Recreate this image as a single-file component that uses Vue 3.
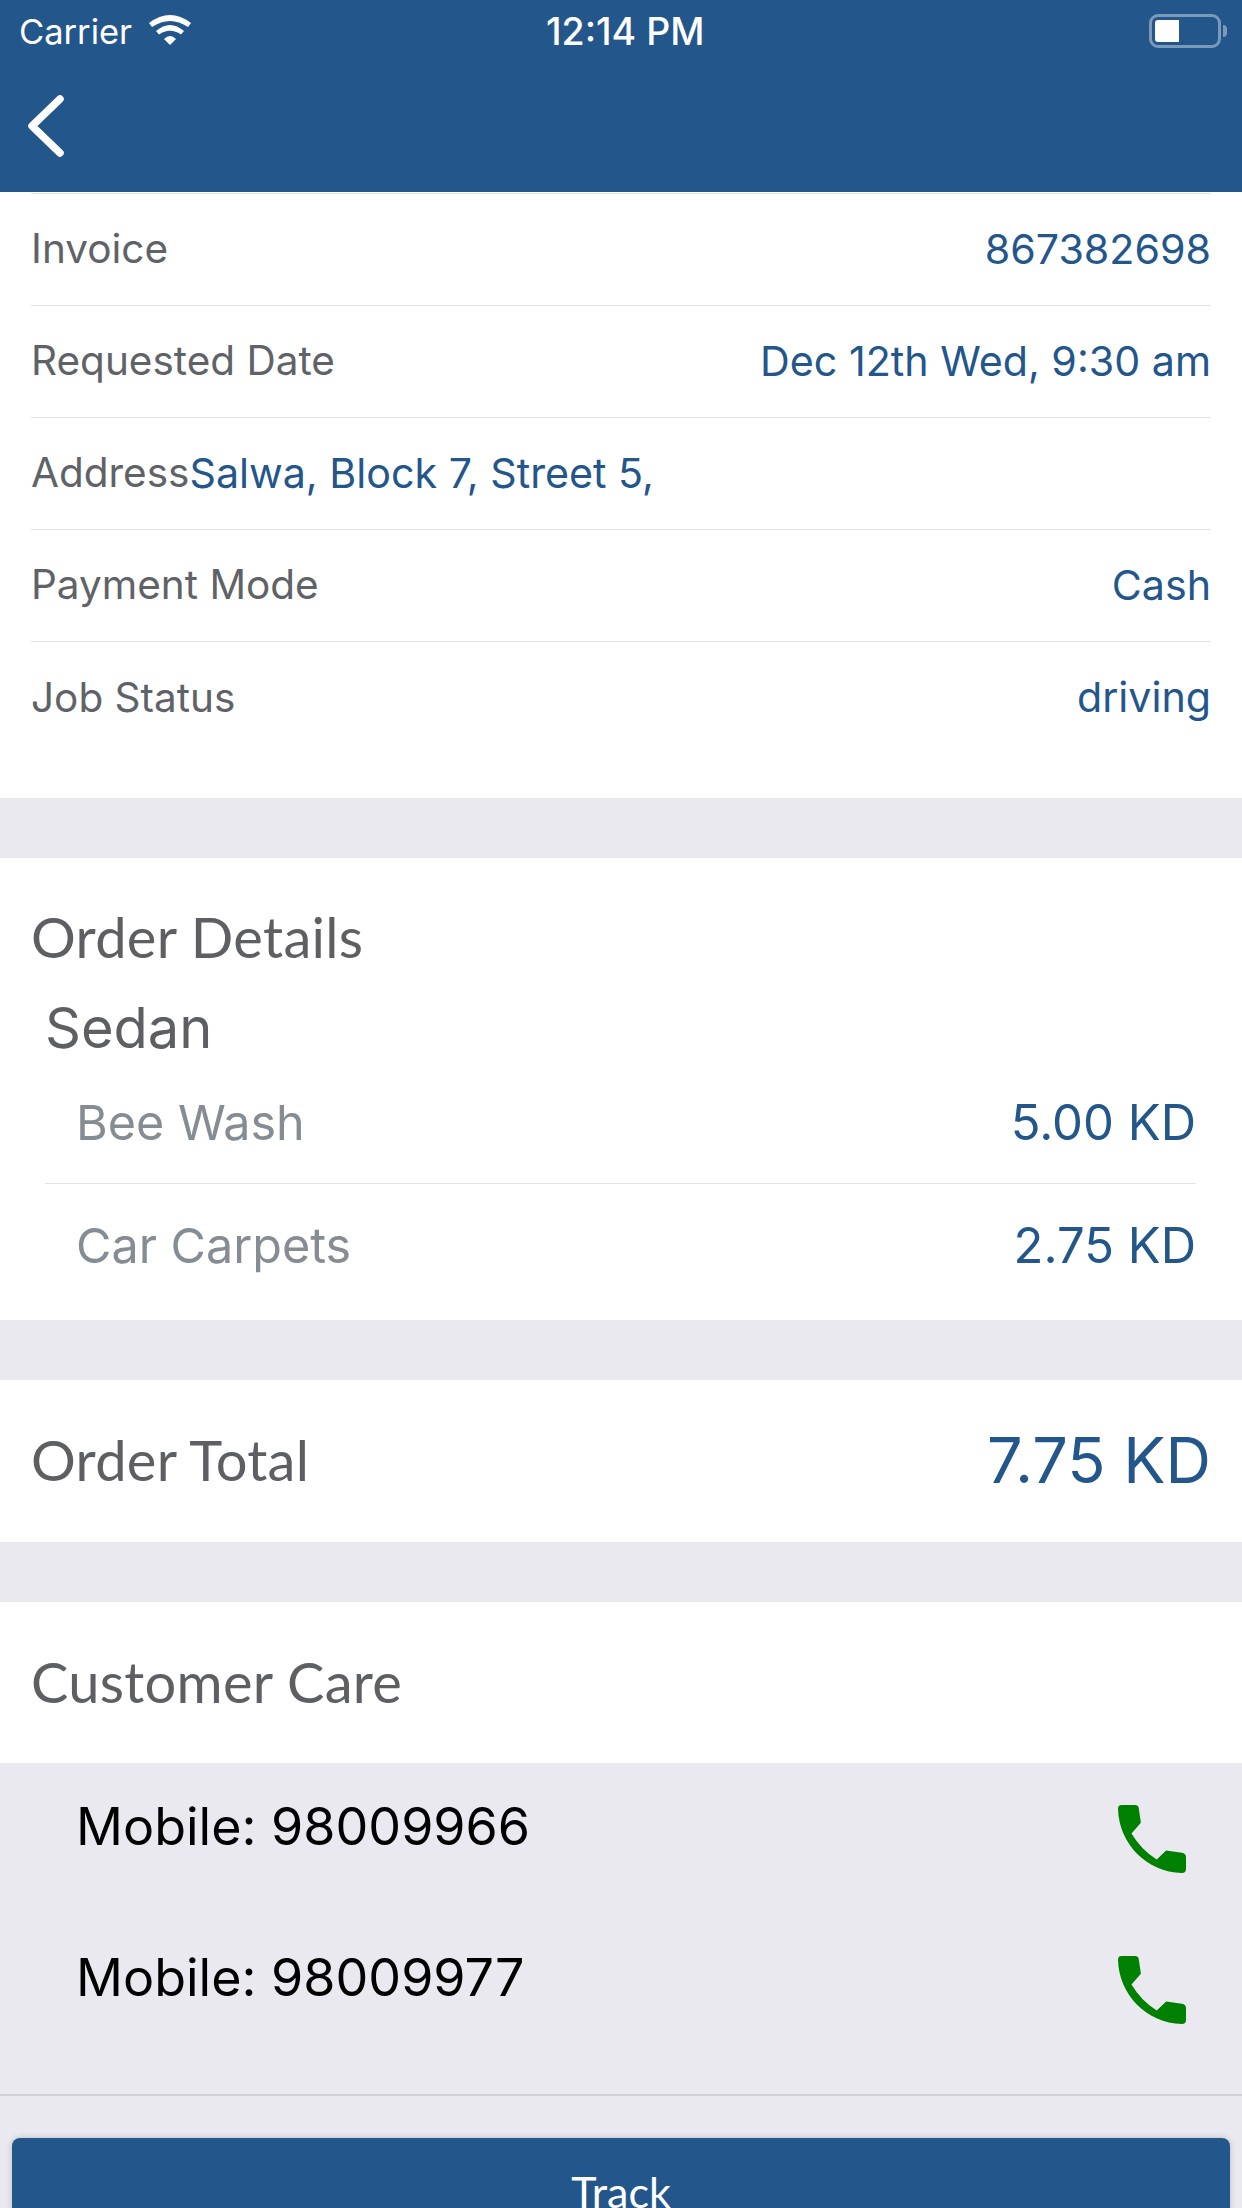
<template>
  <div class="screen">
    <header class="header">
      <div class="status">
        <div class="status__left">
          <span>Carrier</span>
          <svg class="wifi" width="42" height="30" viewBox="0 0 42 30">
            <path d="M0 8 Q21 -8 42 8 L39 12 Q21 0 3 12 Z" fill="#fff" />
            <path d="M7 16 Q21 4 35 16 L32 19.500 Q21 12 10 19.500 Z" fill="#fff" />
            <path d="M15 24 Q21 18 27 24 L21 30 Z" fill="#fff" />
          </svg>
        </div>
        <span class="status__time">12:14 PM</span>
        <div class="battery">
          <div class="battery__body"><div class="battery__level"></div></div>
          <div class="battery__tip"></div>
        </div>
      </div>
      <div class="nav">
        <svg width="40" height="64" viewBox="0 0 40 64">
          <path d="M34 5 L6 32 L34 59" fill="none" stroke="#fff" stroke-width="7.5" stroke-linecap="round" stroke-linejoin="round" />
        </svg>
      </div>
    </header>

    <section class="card info">
      <div class="info__row" v-for="row in infoRows" :key="row.label">
        <span class="info__label">{{ row.label }}</span>
        <span class="info__value">{{ row.value }}</span>
      </div>
      <div class="info__row info__row--address">
        <span class="info__label">Address</span>
        <span class="info__value">Salwa, Block 7, Street 5,</span>
      </div>
      <div class="info__row" v-for="row in infoRowsBottom" :key="row.label">
        <span class="info__label">{{ row.label }}</span>
        <span class="info__value">{{ row.value }}</span>
      </div>
    </section>

    <section class="card details">
      <h2 class="title">Order Details</h2>
      <div class="details__type">Sedan</div>
      <div class="details__list">
        <div class="details__row" v-for="item in items" :key="item.name">
          <span class="details__name">{{ item.name }}</span>
          <span class="details__price">{{ item.price }}</span>
        </div>
      </div>
    </section>

    <section class="card total">
      <h2 class="title">Order Total</h2>
      <span class="total__value">7.75 KD</span>
    </section>

    <section class="card care">
      <h2 class="title">Customer Care</h2>
    </section>

    <div class="phones">
      <div class="phones__row" v-for="phone in phones" :key="phone">
        <span class="phones__text">Mobile: {{ phone }}</span>
        <svg width="68" height="68" viewBox="115 75 202 202">
          <path fill="#008000" d="M125 75 H165 Q177 75 177 87 L183 128 L155 160 Q185 210 230 237 L258 210 L305 217 Q317 219 317 230 V265 Q317 277 305 277 C200 275 118 190 115 87 Q115 75 125 75 Z" />
        </svg>
      </div>
    </div>

    <div class="footer">
      <button class="track" type="button">Track</button>
    </div>
  </div>
</template>

<script setup>
const infoRows = [
  { label: "Invoice", value: "867382698" },
  { label: "Requested Date", value: "Dec 12th Wed, 9:30 am" },
];

const infoRowsBottom = [
  { label: "Payment Mode", value: "Cash" },
  { label: "Job Status", value: "driving" },
];

const items = [
  { name: "Bee Wash", price: "5.00 KD" },
  { name: "Car Carpets", price: "2.75 KD" },
];

const phones = ["98009966", "98009977"];
</script>

<style scoped>
.screen {
  width: 1242px;
  height: 2208px;
  overflow: hidden;
  background: #e9e9ef;
  font-family: "Inter", "Liberation Sans", sans-serif;
}

.header {
  height: 192px;
  background: #23568b;
  color: #fff;
}

.status {
  height: 62px;
  padding: 0 15px 0 19px;
  display: flex;
  align-items: center;
  justify-content: space-between;
  position: relative;
  font-size: 34.5px;
}

.status__left {
  display: flex;
  align-items: center;
  gap: 17px;
}

.wifi {
  margin-top: -2px;
}

.status__time {
  position: absolute;
  left: 546px;
  font-size: 37.5px;
  font-weight: 500;
}

.battery {
  display: flex;
  align-items: center;
  gap: 2px;
}

.battery__body {
  width: 72px;
  height: 34px;
  box-sizing: border-box;
  padding: 3px;
  border: 3px solid rgba(255, 255, 255, 0.4);
  border-radius: 9px;
}

.battery__level {
  width: 24px;
  height: 100%;
  background: #fff;
  border-radius: 3px 0 0 3px;
}

.battery__tip {
  width: 4px;
  height: 12px;
  background: rgba(255, 255, 255, 0.4);
  border-radius: 0 4px 4px 0;
}

.nav {
  padding: 32px 0 0 26px;
}

.card {
  background: #fff;
  margin-bottom: 60px;
}

.info {
  height: 606px;
  box-sizing: border-box;
  padding: 1px 31px 0;
}

.info__row {
  height: 112px;
  padding-bottom: 2px;
  display: flex;
  align-items: center;
  justify-content: space-between;
  border-bottom: 1px solid #e3e3e6;
  box-sizing: border-box;
  font-size: 40.5px;
}

.info__row:first-child {
  height: 113px;
  border-top: 1px solid #e3e3e6;
}

.info__row:last-child {
  border-bottom: none;
}

.info__row--address {
  justify-content: flex-start;
}

.info__label {
  color: #5f6368;
}

.info__value {
  color: #23568b;
  font-size: 41.2px;
}

.title {
  margin: 0;
  font-size: 56px;
  line-height: 66px;
  font-weight: 400;
  letter-spacing: 0.3px;
  color: #5d5f63;
  font-family: "Lato", "Liberation Sans", sans-serif;
}

.details {
  height: 462px;
  box-sizing: border-box;
  padding: 46px 31px 0;
}

.details__type {
  margin: 24px 0 0 14px;
  font-size: 56px;
  line-height: 68px;
  color: #5d5f63;
}

.details__list {
  margin: 0 15px 0 14px;
}

.details__row {
  height: 122px;
  display: flex;
  align-items: center;
  justify-content: space-between;
  padding-left: 31px;
  box-sizing: border-box;
  font-size: 48.5px;
  border-bottom: 1px solid #e3e3e6;
}

.details__row:last-child {
  border-bottom: none;
}

.details__name {
  color: #858c94;
}

.details__price {
  color: #23568b;
  font-size: 49px;
}

.total {
  height: 162px;
  box-sizing: border-box;
  padding: 0 31px 2px;
  display: flex;
  align-items: center;
  justify-content: space-between;
}

.total__value {
  color: #23568b;
  font-size: 63px;
}

.care {
  height: 161px;
  margin-bottom: 0;
  box-sizing: border-box;
  padding: 0 31px 2px;
  display: flex;
  align-items: center;
}

.phones {
  height: 333px;
  box-sizing: border-box;
  padding: 0 56px 0 76px;
  border-bottom: 2px solid #d2d2d6;
}

.phones__row {
  height: 151px;
  display: flex;
  align-items: center;
  justify-content: space-between;
  font-size: 52px;
  color: #000;
}

.phones__text {
  margin-top: -24px;
}

.footer {
  padding: 42px 12px 0;
}

.track {
  width: 100%;
  height: 120px;
  padding: 0 0 12px;
  display: block;
  border: none;
  border-radius: 8px 8px 0 0;
  background: #23568b;
  box-shadow: 0 0 6px rgba(0, 0, 0, 0.2);
  color: #fff;
  font-family: "Lato", "Liberation Sans", sans-serif;
  font-size: 43px;
  text-align: center;
  line-height: 50px;
}
</style>

<style>
html,
body {
  margin: 0;
}
</style>
